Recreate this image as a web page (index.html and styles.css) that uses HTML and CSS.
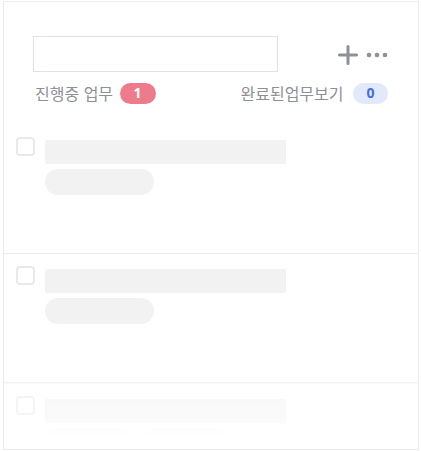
FILE: index.html
```html
<!DOCTYPE html>
<html lang="ko">
<head>
<meta charset="utf-8">
<link rel="stylesheet" href="styles.css">
</head>
<body>
<div class="panel">
  <div class="header">
    <div class="top-row">
      <div class="search"></div>
      <div class="actions">
        <svg class="plus" width="20" height="20" viewBox="0 0 20 20"><path d="M10 1.5V18.5M1.5 10H18.5" stroke="#8c9097" stroke-width="3" stroke-linecap="round"/></svg>
        <svg class="dots" width="22" height="6" viewBox="0 0 22 6"><circle cx="3" cy="3" r="2.3" fill="#8c9097"/><circle cx="11" cy="3" r="2.3" fill="#8c9097"/><circle cx="19" cy="3" r="2.3" fill="#8c9097"/></svg>
      </div>
    </div>
    <div class="label-row">
      <div class="label">진행중 업무 <span class="badge badge-red">1</span></div>
      <div class="label">완료된업무보기 <span class="badge badge-blue">0</span></div>
    </div>
  </div>
  <div class="list">
    <div class="row">
      <div class="check"></div>
      <div class="lines">
        <div class="bar"></div>
        <div class="pills"><div class="pill"></div></div>
      </div>
    </div>
    <div class="row">
      <div class="check"></div>
      <div class="lines">
        <div class="bar"></div>
        <div class="pills"><div class="pill"></div></div>
      </div>
    </div>
    <div class="row row-fade">
      <div class="check"></div>
      <div class="lines">
        <div class="bar"></div>
        <div class="pills"><div class="pill pill-sm"></div><div class="pill pill-sm"></div></div>
      </div>
    </div>
  </div>
</div>
</body>
</html>
```
FILE: styles.css
```css
* { box-sizing: border-box; }
html, body { margin: 0; padding: 0; background: #fff; }
body {
  font-family: "Noto Sans CJK KR", "Noto Sans", sans-serif;
  width: 421px;
  height: 451px;
  overflow: hidden;
}
.panel {
  margin: 1px 2px 0 3px;
  width: 416px;
  height: 449px;
  border: 1px solid #ebebeb;
  border-top-color: #eef0f3;
  display: flex;
  flex-direction: column;
  overflow: hidden;
}
.header {
  flex: none;
  padding: 34px 30px 0 29px;
  height: 123px;
}
.top-row {
  display: flex;
  align-items: center;
  justify-content: space-between;
}
.search {
  width: 245px;
  height: 36px;
  border: 1px solid #dfe2e6;
  background: #fff;
}
.actions {
  display: flex;
  align-items: center;
  gap: 8px;
  margin-top: 1px;
}
.plus { display: block; }
.dots { display: block; }
.label-row {
  display: flex;
  justify-content: space-between;
  align-items: center;
  margin-top: 10px;
  padding-left: 2px;
}
.label {
  display: flex;
  align-items: center;
  font-size: 16px;
  color: #8c9097;
  line-height: 22px;
  white-space: pre;
}
.badge {
  display: inline-flex;
  align-items: center;
  justify-content: center;
  width: 36px;
  height: 21px;
  border-radius: 11px;
  font-size: 14px;
  font-weight: 700;
  font-family: "Noto Sans", sans-serif;
  margin-left: 2px;
}
.badge-red { background: #ee7b8b; color: #fff; }
.badge-blue { background: #e2e9fb; color: #3e6ee8; width: 35px; margin-left: 5px; }
.list { display: flex; flex-direction: column; flex: none; }
.row {
  flex: none;
  display: flex;
  gap: 10px;
  padding: 12px 0 0 12px;
  height: 129px;
  border-bottom: 1px solid #ebebeb;
}
.check {
  width: 19px;
  height: 19px;
  border: 2px solid #e9e9e9;
  border-radius: 4px;
  flex: none;
}
.lines { display: flex; flex-direction: column; padding-top: 3px; }
.bar {
  width: 241px;
  height: 24px;
  background: #f2f2f2;
  border-radius: 2px;
}
.pills { display: flex; gap: 9px; margin-top: 5px; }
.pill {
  width: 109px;
  height: 26px;
  border-radius: 13px;
  background: #f2f2f2;
}
.pill-sm { width: 88px; }
.row-fade {
  border-top: 2px solid #f6f6f6;
  border-bottom: none;
  margin-top: -1px;
  -webkit-mask-image: linear-gradient(to bottom, rgba(0,0,0,0.6) 0px, rgba(0,0,0,0.45) 32px, rgba(0,0,0,0.12) 48px, rgba(0,0,0,0) 56px);
  mask-image: linear-gradient(to bottom, rgba(0,0,0,0.6) 0px, rgba(0,0,0,0.45) 32px, rgba(0,0,0,0.12) 48px, rgba(0,0,0,0) 56px);
}
```
